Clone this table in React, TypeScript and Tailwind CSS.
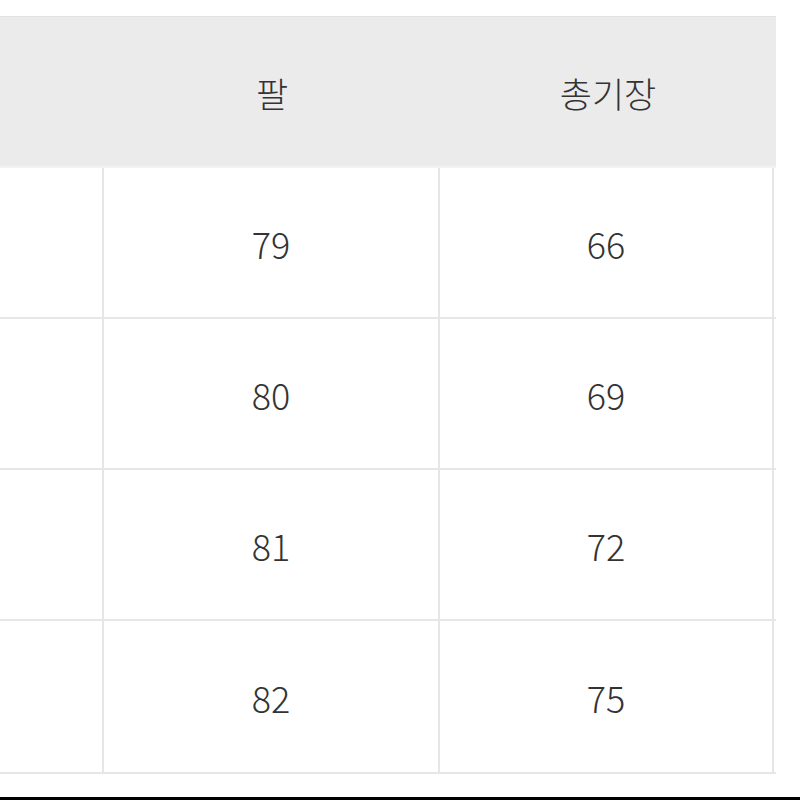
import React from 'react';

const rows = [
  ['79', '66'],
  ['80', '69'],
  ['81', '72'],
  ['82', '75'],
];

export default function App() {
  return (
    <div
      className="w-[800px] h-[800px] bg-white flex flex-col overflow-hidden text-[#333]"
      style={{ fontFamily: '"Noto Sans CJK KR", "Noto Sans", sans-serif' }}
    >
      <div className="pt-4 w-[776px]">
        {/* header */}
        <div className="grid grid-cols-[104px_336px_336px] h-[152px] bg-[#ebebeb] border-t border-[#e2e2e2] border-b-2 border-b-[#f2f2f2]">
          <div />
          <div className="flex items-center justify-center text-[35px] font-light pt-1">팔</div>
          <div className="flex items-center justify-center text-[35px] font-light pt-1">총기장</div>
        </div>

        {/* body */}
        {rows.map((r, i) => (
          <div key={i} className="grid grid-cols-[104px_336px_334px] h-[151px] last:h-[153px] border-b-2 border-[#e6e6e6]">
            <div className="border-r-2 border-[#e6e6e6]" />
            <div className="flex items-center justify-center text-[36px] font-light border-r-2 border-[#e6e6e6]">{r[0]}</div>
            <div className="flex items-center justify-center text-[36px] font-light border-r-2 border-[#e6e6e6]">{r[1]}</div>
          </div>
        ))}
      </div>
      <div className="flex-1" />
      <div className="h-[3px] bg-black" />
    </div>
  );
}
